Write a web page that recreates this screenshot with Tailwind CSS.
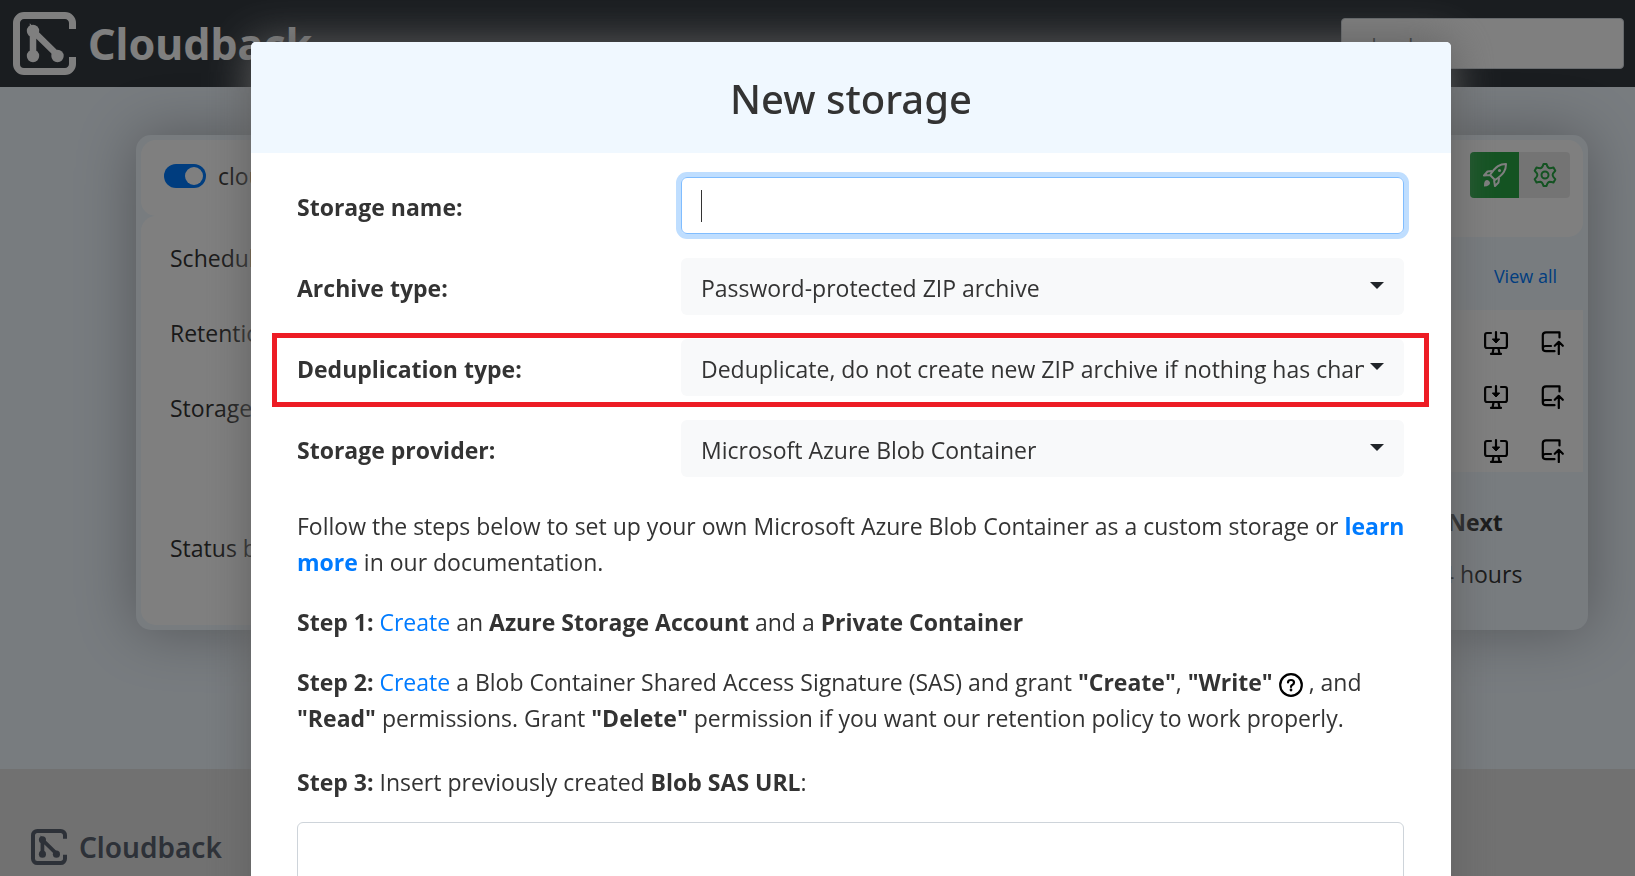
<!DOCTYPE html>
<html lang="en">
<head>
<meta charset="utf-8">
<title>Cloudback – New storage</title>
<script src="https://cdn.jsdelivr.net/npm/@tailwindcss/browser@4"></script>
</head>
<body class="min-h-screen overflow-hidden bg-[#f0f8ff] font-['Open_Sans','Noto_Sans',sans-serif] text-[23px] leading-9 text-[#333333]">
<svg class="hidden" aria-hidden="true">
  <symbol id="logo" viewBox="0 0 63 63">
    <path d="M59.500 17V11a7.500 7.500 0 0 0-7.500-7.500H11A7.500 7.500 0 0 0 3.500 11V52a7.500 7.500 0 0 0 7.500 7.500H52a7.500 7.500 0 0 0 7.500-7.500V45" fill="none" stroke="currentColor" stroke-width="7"/>
    <path d="M20 43V19L44.500 43" fill="none" stroke="currentColor" stroke-width="6.500"/>
    <circle cx="20" cy="19" r="6.200" fill="currentColor"/><circle cx="20" cy="44" r="6.200" fill="currentColor"/><circle cx="44.500" cy="44" r="6.200" fill="currentColor"/>
  </symbol>
  <symbol id="restore" viewBox="0 0 24 24">
    <g fill="none" stroke="currentColor" stroke-width="2.200" stroke-linecap="round" stroke-linejoin="round">
      <path d="M7 2H3Q1.100 2 1.100 4V15Q1.100 17 3 17H21Q22.900 17 22.900 15V4Q22.900 2 21 2H17M12 1.100V10M9.500 17.500L8.500 22.900M14.500 17.500L15.500 22.900M7 22.900H17"/>
    </g>
    <path d="M8.300 8H15.700L12 12Z" fill="currentColor" stroke="currentColor" stroke-linejoin="round"/>
  </symbol>
  <symbol id="upload" viewBox="0 0 24 24">
    <path d="M18.500 6.500V1.300H5Q1.800 1.300 1.800 4.300V17.500Q1.800 20.200 5 20.200H13.500M1.800 17.500Q2 15 4.500 15H10M17.800 23V12M13.800 14.800L17.800 10.800L21.800 14.800" fill="none" stroke="currentColor" stroke-width="2.200" stroke-linecap="round" stroke-linejoin="round"/>
  </symbol>
</svg>

<div class="flex min-h-screen flex-col">
  <header class="flex h-[87px] items-center justify-between bg-[#343a40] pr-[11px] pl-[13px]">
    <a href="#" class="flex items-center gap-3 font-['Noto_Sans','Open_Sans',sans-serif] text-[43px] font-bold text-white"><svg class="size-[63px]"><use href="#logo"/></svg>Cloudback</a>
    <input type="text" aria-label="Search" value="cloud" class="h-[51px] w-[283px] rounded border border-[#ced4da] bg-white px-5 pt-1 text-[20px] text-[#495057]">
  </header>

  <main class="flex-1 pt-12 pr-[47px] pl-[136px]">
    <section class="grid h-[495px] grid-cols-2 rounded-[15px] bg-[#f0f8ff] p-[5px] shadow-[0_0_60px_rgba(0,0,0,0.3)]">
      <div class="flex flex-col">
        <div class="flex h-[76px] items-center gap-3 rounded-[15px] rounded-tr-none bg-white pb-1 pl-[23px]">
          <input id="enabled" type="checkbox" checked class="peer sr-only">
          <label for="enabled" class="flex items-center gap-3"><span class="flex h-6 w-[42px] justify-end rounded-full bg-[#007bff] p-[3px]"><span class="size-[18px] rounded-full bg-white"></span></span>cloudback</label>
        </div>
        <dl class="flex flex-1 flex-col rounded-[15px] rounded-r-none bg-white pt-6 pl-[29px]">
          <dt class="h-[75px]">Schedule</dt>
          <dt class="h-[75px]">Retention</dt>
          <dt class="h-[140px]">Storage</dt>
          <dt>Status badge</dt>
        </dl>
      </div>
      <div class="flex flex-col">
        <div class="flex h-[97px] justify-end rounded-r-[15px] bg-white pt-3 pr-[13px]">
          <div class="flex h-[46px] overflow-hidden rounded">
            <button type="button" aria-label="Run backup" class="grid w-[49px] place-items-center bg-[#28a745] text-white">
              <svg class="size-6" viewBox="0 0 24 24" fill="none" stroke="currentColor" stroke-width="2" stroke-linejoin="round"><path d="M23 1C17 1 13 3 7 12L12 17C21 11 23 7 23 1ZM9 8L4.500 8.500L1 12.500L7 12M16 15L15.500 19.500L12 23L11 17"/><circle cx="16.500" cy="7.500" r="1.500" fill="currentColor" stroke="none"/><path d="M2 18Q4 16 6 18T6 22Q4 23.500 1 23.500Q0.500 20 2 18Z" fill="currentColor" stroke="none"/></svg>
            </button>
            <button type="button" aria-label="Settings" class="grid w-[51px] place-items-center bg-[#e9e9e9] text-[#28a745]">
              <svg class="size-6" viewBox="0 0 24 24" fill="none" stroke="currentColor" stroke-width="2" stroke-linejoin="round"><path d="M10.500 1H13.500Q14.500 4.800 16.500 5.200Q18.500 5.200 20.500 4.500L22.300 7.800Q19.600 10.500 19.600 12T22.300 16.200L20.500 19.500Q18.500 18.800 16.500 18.800Q14.500 19.200 13.500 23H10.500Q9.500 19.200 7.500 18.800Q5.500 18.800 3.500 19.500L1.700 16.200Q4.400 13.500 4.400 12T1.700 7.800L3.500 4.500Q5.500 5.200 7.500 5.200Q9.500 4.800 10.500 1Z"/><circle cx="12" cy="12" r="3.500"/></svg>
            </button>
          </div>
        </div>
        <div class="flex h-[73px] items-center justify-end pt-1 pr-[26px] text-[18px]"><a href="#" class="text-[#007bff]">View all</a></div>
        <ul class="bg-white text-black">
          <li class="flex h-[54px] items-center justify-end gap-[33px] pt-3 pr-[18px]"><button type="button" aria-label="Restore"><svg class="size-6"><use href="#restore"/></svg></button><button type="button" aria-label="Upload"><svg class="size-6"><use href="#upload"/></svg></button></li>
          <li class="flex h-[54px] items-center justify-end gap-[33px] pt-3 pr-[18px]"><button type="button" aria-label="Restore"><svg class="size-6"><use href="#restore"/></svg></button><button type="button" aria-label="Upload"><svg class="size-6"><use href="#upload"/></svg></button></li>
          <li class="flex h-[54px] items-center justify-end gap-[33px] pt-3 pr-[18px]"><button type="button" aria-label="Restore"><svg class="size-6"><use href="#restore"/></svg></button><button type="button" aria-label="Upload"><svg class="size-6"><use href="#upload"/></svg></button></li>
        </ul>
        <div class="flex w-[216px] flex-col gap-4 self-end pt-8 text-center"><strong class="font-bold">Next</strong><span>24 hours</span></div>
      </div>
    </section>
  </main>

  <footer class="h-[107px] bg-[#e2e2e2] pt-[60px] pl-[31px]">
    <a href="#" class="flex items-center gap-3 font-['Noto_Sans','Open_Sans',sans-serif] text-[28px] font-semibold text-[#5a6270]"><svg class="size-9"><use href="#logo"/></svg>Cloudback</a>
  </footer>
</div>

<div class="fixed inset-0 overflow-hidden bg-black/50 pt-[42px] pr-[184px] pl-[251px]">
  <div role="dialog" aria-modal="true" aria-labelledby="title" class="min-h-screen rounded-[5px] bg-white shadow-[0_0_45px_#606060]">
    <div class="flex h-[111px] items-center justify-center rounded-t-[5px] bg-[#f0f8ff] pt-[2px]"><h1 id="title" class="font-['Noto_Sans','Open_Sans',sans-serif] text-[40px] font-medium">New storage</h1></div>
    <form class="pt-6 pr-[47px] pl-[46px]">
      <div class="mb-6 grid h-[57px] grid-cols-[384px_1fr] items-center">
        <label for="name" class="pt-[2px] font-bold">Storage name:</label>
        <div class="relative h-full">
          <input id="name" type="text" class="size-full rounded-md border border-[#80bdff] px-5 shadow-[0_0_0_5px_#bfdeff] outline-none">
          <span class="absolute top-[13px] left-5 h-8 w-px bg-[#333333]"></span>
        </div>
      </div>
      <div class="mb-6 grid h-[57px] grid-cols-[384px_1fr] items-center">
        <label for="archive" class="pt-[2px] font-bold">Archive type:</label>
        <div class="relative h-full">
          <select id="archive" class="size-full appearance-none rounded-md bg-[#f8f9fa] pt-[2px] pr-10 pl-5 text-[#333333]"><option>Password-protected ZIP archive</option></select>
          <svg class="pointer-events-none absolute top-6 right-5 h-[7px] w-[14px]" viewBox="0 0 14 7"><path d="M0 0H14L7 7Z" fill="#212529"/></svg>
        </div>
      </div>
      <div class="relative mb-6 grid h-[57px] grid-cols-[384px_1fr] items-center">
        <label for="dedup" class="pt-[2px] font-bold">Deduplication type:</label>
        <div class="relative h-full">
          <select id="dedup" class="size-full appearance-none rounded-md bg-[#f8f9fa] pt-[2px] pr-10 pl-5 text-[#333333]"><option>Deduplicate, do not create new ZIP archive if nothing has changed</option></select>
          <svg class="pointer-events-none absolute top-6 right-5 h-[7px] w-[14px]" viewBox="0 0 14 7"><path d="M0 0H14L7 7Z" fill="#212529"/></svg>
        </div>
        <div class="pointer-events-none absolute -inset-x-[25px] -top-[6px] -bottom-[11px] border-[5px] border-[#ed1c24]"></div>
      </div>
      <div class="mb-[31px] grid h-[57px] grid-cols-[384px_1fr] items-center">
        <label for="provider" class="pt-[2px] font-bold">Storage provider:</label>
        <div class="relative h-full">
          <select id="provider" class="size-full appearance-none rounded-md bg-[#f8f9fa] pt-[2px] pr-10 pl-5 text-[#333333]"><option>Microsoft Azure Blob Container</option></select>
          <svg class="pointer-events-none absolute top-6 right-5 h-[7px] w-[14px]" viewBox="0 0 14 7"><path d="M0 0H14L7 7Z" fill="#212529"/></svg>
        </div>
      </div>
      <p class="-mr-3 mb-6">Follow the steps below to set up your own Microsoft Azure Blob Container as a custom storage or <a href="#" class="font-bold text-[#007bff]">learn more</a> in our documentation.</p>
      <p class="mb-6"><b>Step 1:</b> <a href="#" class="text-[#007bff]">Create</a> an <b>Azure Storage Account</b> and a <b>Private Container</b></p>
      <p class="mb-7"><b>Step 2:</b> <a href="#" class="text-[#007bff]">Create</a> a Blob Container Shared Access Signature (SAS) and grant <b>"Create"</b>, <b>"Write"</b> <svg class="inline size-6 text-black" viewBox="0 0 24 24" fill="none" stroke="currentColor" stroke-width="2.200"><circle cx="12" cy="12" r="10.800"/><path d="M9 9.500Q9 7 12 7T15 9.500Q15 11 13.500 11.700Q12 12.300 12 14" stroke-linecap="round"/><circle cx="12" cy="17" r="1.400" fill="currentColor" stroke="none"/></svg> , and <b>"Read"</b> permissions. Grant <b>"Delete"</b> permission if you want our retention policy to work properly.</p>
      <label for="sas" class="mb-[22px] block"><b>Step 3:</b> Insert previously created <b>Blob SAS URL</b>:</label>
      <textarea id="sas" rows="4" class="block w-full resize-none rounded-md border border-[#ced4da] px-5 py-2"></textarea>
    </form>
  </div>
</div>
</body>
</html>
